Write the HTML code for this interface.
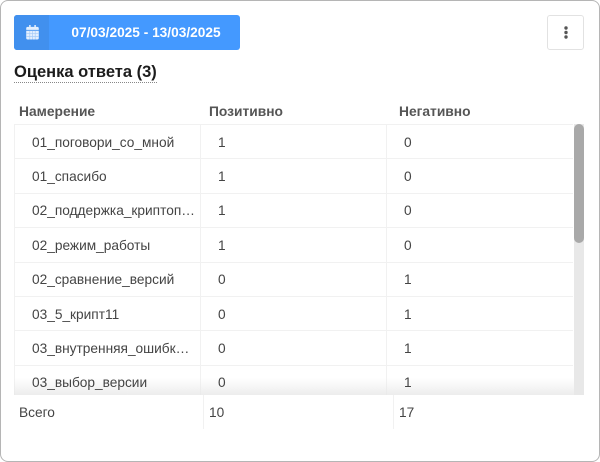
<!DOCTYPE html>
<html><head><meta charset="utf-8">
<style>
html,body{margin:0;padding:0;background:#fff}
body{width:600px;height:462px;position:relative;overflow:hidden;font-family:"Liberation Sans",sans-serif;color:#444}
.wrap{position:absolute;left:0;top:0;width:600px;height:462px;filter:blur(.35px)}
.abs{position:absolute}
.card{left:0;top:0;width:598px;height:460px;border:1px solid #b5b5b5;border-radius:8px;box-sizing:content-box}
.btn{left:14px;top:15px;width:226px;height:35px;background:#4499ff;border-radius:3px;overflow:hidden}
.btn i{position:absolute;left:0;top:0;width:35px;height:35px;background:#4190ee}
.btn span{position:absolute;left:35px;right:0;top:0;line-height:35px;text-align:center;color:#fff;font-weight:bold;font-size:13.7px;padding-left:3px;box-sizing:border-box;white-space:nowrap}
.more{left:547px;top:15px;width:37px;height:35px;border:1px solid #e2e2e2;border-radius:3px;box-sizing:border-box;background:#fff}
.title{left:14px;top:62px;font-size:16.5px;font-weight:bold;color:#1c1c1c;line-height:20px;white-space:nowrap}
.dots{left:14px;top:82px;width:143px;border-top:1px dotted #888}
.th{top:104px;font-size:13.8px;font-weight:bold;color:#555;line-height:16px;white-space:nowrap}
.t{font-size:13.7px;line-height:16px;color:#444;white-space:nowrap;position:absolute}
.hl{position:absolute;left:15px;width:558px;height:1px;background:#f1f1f1}
.vl{position:absolute;width:1px;background:#f1f1f1}
.fade{left:14px;top:378px;width:570px;height:17px;background:linear-gradient(to bottom,rgba(232,232,232,0),rgba(232,232,232,.8))}
</style></head><body>
<div class="wrap">
<div class="abs card"></div>
<div class="abs btn"><i></i><span>07/03/2025 - 13/03/2025</span>
<svg class="abs" style="left:12px;top:10px" width="13" height="14.5" viewBox="0 0 13 15"><path fill="#e3effe" d="M3 0h1.6v2h3.8V0H10v2h1.5A1.5 1.5 0 0 1 13 3.5V5H0V3.5A1.5 1.5 0 0 1 1.5 2H3zM0 6h13v7.5a1.5 1.5 0 0 1-1.5 1.5h-10A1.5 1.5 0 0 1 0 13.5z"/><path stroke="#a5cbf8" stroke-width=".7" d="M3.7 6v9M6.5 6v9M9.3 6v9M0 9h13M0 12h13"/></svg>
</div>
<div class="abs more"><svg class="abs" style="left:15px;top:10px" width="6" height="13" viewBox="0 0 6 13"><circle cx="3" cy="2" r="1.7" fill="#555"/><circle cx="3" cy="6.5" r="1.7" fill="#555"/><circle cx="3" cy="11" r="1.7" fill="#555"/></svg></div>
<div class="abs title">Оценка ответа (3)</div>
<div class="abs dots"></div>
<div class="abs th" style="left:19px">Намерение</div>
<div class="abs th" style="left:209px">Позитивно</div>
<div class="abs th" style="left:399px">Негативно</div>

<div class="hl" style="top:124px"></div>
<div class="hl" style="top:158px"></div>
<div class="hl" style="top:193px"></div>
<div class="hl" style="top:227px"></div>
<div class="hl" style="top:262px"></div>
<div class="hl" style="top:296px"></div>
<div class="hl" style="top:330px"></div>
<div class="hl" style="top:365px"></div>
<div class="vl" style="left:14px;top:124px;height:271px"></div>
<div class="vl" style="left:200px;top:124px;height:271px"></div>
<div class="vl" style="left:386px;top:124px;height:271px"></div>

<div class="abs" style="left:574px;top:124px;width:10px;height:271px;background:#e8e8e8"></div>
<div class="abs" style="left:574px;top:124px;width:10px;height:119px;background:#a9a9a9;border-radius:5px"></div>
<div class="abs fade"></div>

<div class="t" style="left:32px;top:135px">01_поговори_со_мной</div><div class="t" style="left:218px;top:135px">1</div><div class="t" style="left:404px;top:135px">0</div>
<div class="t" style="left:32px;top:169px">01_спасибо</div><div class="t" style="left:218px;top:169px">1</div><div class="t" style="left:404px;top:169px">0</div>
<div class="t" style="left:32px;top:203px">02_поддержка_криптоп…</div><div class="t" style="left:218px;top:203px">1</div><div class="t" style="left:404px;top:203px">0</div>
<div class="t" style="left:32px;top:238px">02_режим_работы</div><div class="t" style="left:218px;top:238px">1</div><div class="t" style="left:404px;top:238px">0</div>
<div class="t" style="left:32px;top:272px">02_сравнение_версий</div><div class="t" style="left:218px;top:272px">0</div><div class="t" style="left:404px;top:272px">1</div>
<div class="t" style="left:32px;top:307px">03_5_крипт11</div><div class="t" style="left:218px;top:307px">0</div><div class="t" style="left:404px;top:307px">1</div>
<div class="t" style="left:32px;top:341px">03_внутренняя_ошибк…</div><div class="t" style="left:218px;top:341px">0</div><div class="t" style="left:404px;top:341px">1</div>
<div class="t" style="left:32px;top:375px">03_выбор_версии</div><div class="t" style="left:218px;top:375px">0</div><div class="t" style="left:404px;top:375px">1</div>

<div class="vl" style="left:203px;top:395px;height:34px"></div>
<div class="vl" style="left:393px;top:395px;height:34px"></div>
<div class="t" style="left:19px;top:405px">Всего</div>
<div class="t" style="left:209px;top:405px">10</div>
<div class="t" style="left:399px;top:405px">17</div>
</div>
</body></html>
